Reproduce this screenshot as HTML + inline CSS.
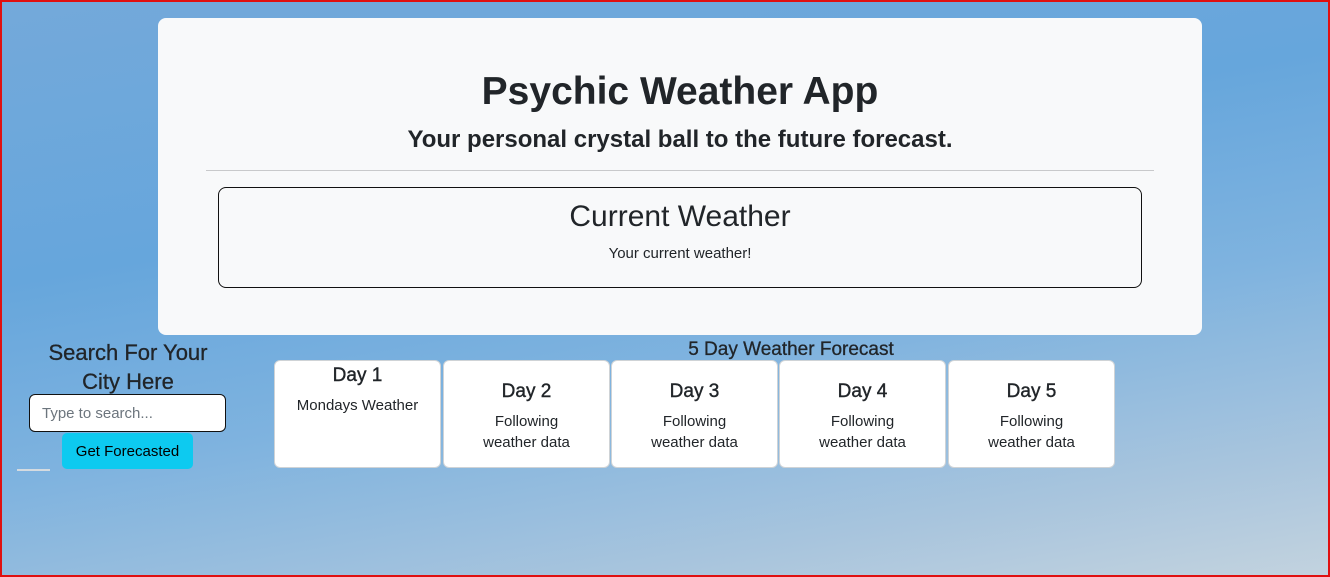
<!DOCTYPE html>
<html><head><style>
*{margin:0;padding:0;box-sizing:border-box}
body{width:1330px;height:577px;overflow:hidden;font-family:"Liberation Sans",sans-serif;color:#212529;position:relative;
background:linear-gradient(170deg,#74a9da 0%,#66a6dc 35%,#7fb3df 60%,#a9c5dd 85%,#c3d3df 100%);}
.frame{position:absolute;left:0;top:0;width:1330px;height:577px;border:2px solid #e01010;z-index:9}
.a{position:absolute}
.c{text-align:center}
.panel{left:158px;top:18px;width:1044px;height:317px;background:#f8f9fa;border-radius:8px}
.card{background:#fff;border:1px solid #cfd3d6;border-radius:6px;top:360px;height:108px;width:167px;text-align:center}
.card h5{font-size:19px;font-weight:normal;margin-top:19px;line-height:24px;-webkit-text-stroke:0.4px #212529}
.card p{font-size:15px;line-height:21px;margin-top:7px}
</style></head><body>
<div class="frame"></div>
<div class="a panel"></div>
<div class="a c" style="left:158px;width:1044px;top:68px;font-size:39px;font-weight:bold;line-height:48px">Psychic Weather App</div>
<div class="a c" style="left:158px;width:1044px;top:126px;font-size:24px;font-weight:bold;line-height:28px">Your personal crystal ball to the future forecast.</div>
<div class="a" style="left:206px;top:170px;width:948px;height:1px;background:#c8c9cb"></div>
<div class="a" style="left:218px;top:187px;width:924px;height:101px;border:1px solid #111;border-radius:8px"></div>
<div class="a c" style="left:218px;width:924px;top:199px;font-size:30px;line-height:36px">Current Weather</div>
<div class="a c" style="left:218px;width:924px;top:244px;font-size:15px;line-height:20px">Your current weather!</div>

<div class="a c" style="left:18px;width:220px;top:338px;font-size:22px;line-height:29px;-webkit-text-stroke:0.3px #212529">Search For Your<br>City Here</div>
<div class="a" style="left:29px;top:394px;width:197px;height:38px;background:#fff;border:1px solid #111;border-radius:6px;font-size:15px;color:#6c757d;padding:10px 12px">Type to search...</div>
<div class="a c" style="left:62px;top:433px;width:131px;height:36px;background:#0dcaf0;border-radius:5px;font-size:15px;line-height:38px;color:#000">Get Forecasted</div>
<div class="a" style="left:17px;top:469px;width:33px;height:2px;background:#d5dbe0"></div>

<div class="a c" style="left:591px;width:400px;top:338px;font-size:19px;line-height:24px;-webkit-text-stroke:0.3px #212529">5 Day Weather Forecast</div>
<div class="a card" style="left:274px"><h5 style="margin-top:3px">Day 1</h5><p>Mondays Weather</p></div>
<div class="a card" style="left:443px"><h5>Day 2</h5><p>Following<br>weather data</p></div>
<div class="a card" style="left:611px"><h5>Day 3</h5><p>Following<br>weather data</p></div>
<div class="a card" style="left:779px"><h5>Day 4</h5><p>Following<br>weather data</p></div>
<div class="a card" style="left:948px"><h5>Day 5</h5><p>Following<br>weather data</p></div>
</body></html>
